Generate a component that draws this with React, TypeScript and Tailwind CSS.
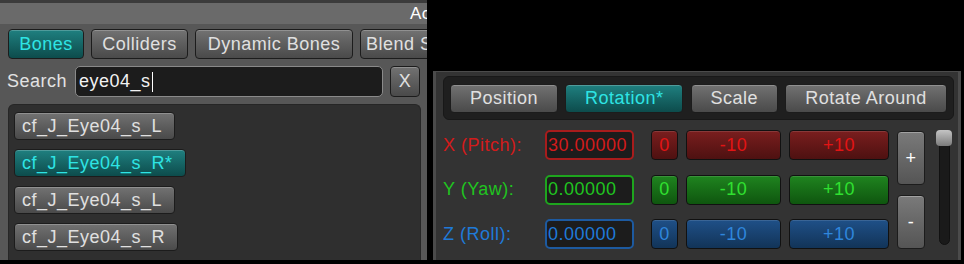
import clsx from 'clsx';

interface BtnProps {
  children?: React.ReactNode;
  active?: boolean;
  className?: string;
}

function Btn({ children, active, className }: BtnProps) {
  return (
    <div
      className={clsx(
        'flex shrink-0 items-center rounded-[4px] border border-[#1c1c1c] shadow-[inset_0_1px_0_rgba(255,255,255,0.22)] whitespace-nowrap',
        active
          ? 'bg-linear-to-b from-[#1f8080] to-[#0d4c4c] text-[#2ee4e4]'
          : 'bg-linear-to-b from-[#727272] to-[#4a4a4a] text-[#e0e0e0]',
        className
      )}
    >
      {children}
    </div>
  );
}

const tabs = [
  { name: 'Bones', w: 'w-[76px]', active: true },
  { name: 'Colliders', w: 'w-[97px]' },
  { name: 'Dynamic Bones', w: 'w-[158px]' },
  { name: 'Blend Shapes', w: 'w-[130px]' },
];

const bones = [
  { name: 'cf_J_Eye04_s_L', w: 'w-[161px]' },
  { name: 'cf_J_Eye04_s_R*', w: 'w-[172px]', active: true },
  { name: 'cf_J_Eye04_s_L', w: 'w-[161px]' },
  { name: 'cf_J_Eye04_s_R', w: 'w-[164px]' },
];

const modes = [
  { name: 'Position', w: 'w-[108px]' },
  { name: 'Rotation*', w: 'w-[118px]', active: true },
  { name: 'Scale', w: 'w-[87px]' },
  { name: 'Rotate Around', w: 'w-[162px]' },
];

const axes = [
  {
    label: 'X (Pitch):',
    value: '30.00000',
    text: 'text-[#d21b1b]',
    border: 'border-[#a81c1c]',
    btn: 'bg-linear-to-b from-[#7a1e1e] to-[#4e1111] text-[#e21414]',
  },
  {
    label: 'Y (Yaw):',
    value: '0.00000',
    text: 'text-[#20c420]',
    border: 'border-[#1ea51e]',
    btn: 'bg-linear-to-b from-[#1f841f] to-[#0f560f] text-[#30e030]',
  },
  {
    label: 'Z (Roll):',
    value: '0.00000',
    text: 'text-[#1f7ad8]',
    border: 'border-[#1d5aa0]',
    btn: 'bg-linear-to-b from-[#1f5088] to-[#123458] text-[#2f86dc]',
  },
];

function AxisBtn({ cls, w, children }: { cls: string; w: string; children: React.ReactNode }) {
  return (
    <div
      className={clsx(
        'flex h-full shrink-0 items-center justify-center rounded-[4px] border border-[#111111] shadow-[inset_0_1px_0_rgba(255,255,255,0.12)]',
        cls,
        w
      )}
    >
      {children}
    </div>
  );
}

export default function App() {
  return (
    <div className="flex h-[264px] w-[964px] items-start overflow-hidden bg-black font-['Liberation_Sans',Arial,sans-serif] text-[18px] tracking-[0.5px]">
      {/* bone list window */}
      <div className="flex h-[260px] w-[427px] shrink-0 flex-col overflow-hidden bg-[#575757]">
        <div className="flex h-[24px] shrink-0 items-center overflow-hidden border-t-[3px] border-[#3b3b3b] bg-[#6a6a6a] pl-[410px] text-[17px] whitespace-nowrap text-white">
          Ac
        </div>

        <div className="mt-[5px] flex h-[30px] shrink-0 gap-[7px] pl-[8px]">
          {tabs.map((t) => (
            <Btn key={t.name} active={t.active} className={clsx('h-full justify-center', t.w)}>
              {t.name}
            </Btn>
          ))}
        </div>

        <div className="mt-[7px] flex h-[31px] shrink-0 items-center pl-[7px]">
          <span className="w-[68px] text-[#e2e2e2]">Search</span>
          <div className="flex h-full w-[308px] items-center rounded-[5px] border border-[#8a8a8a] bg-[#1c1c1c] pl-[3px] text-[#f2f2f2]">
            eye04_s
            <span className="ml-[1px] h-[20px] w-[1px] bg-white" />
          </div>
          <Btn className="ml-[7px] h-full w-[30px] justify-center">X</Btn>
        </div>

        <div className="mt-[7px] ml-[8px] flex w-[413px] flex-1 flex-col items-start gap-[9px] rounded-t-[6px] border border-b-0 border-[#262626] bg-[#2f2f2f] pt-[7px] pl-[5px]">
          {bones.map((b, i) => (
            <Btn key={i} active={b.active} className={clsx('h-[28px] pl-[7px]', b.w)}>
              {b.name}
            </Btn>
          ))}
        </div>
      </div>

      {/* transform panel */}
      <div className="mt-[71px] ml-[6px] flex h-[189px] w-[528px] shrink-0 flex-col overflow-hidden border-t border-l-[3px] border-r-[3px] border-[#4b4b4b] bg-[#333333] pr-[4px] pl-[7px]">
        <div className="mt-[4px] flex h-[44px] w-[511px] shrink-0 items-center justify-between rounded-[6px] border border-[#181818] bg-[#1f1f1f] px-[6px]">
          {modes.map((m) => (
            <Btn key={m.name} active={m.active} className={clsx('h-[29px] justify-center', m.w)}>
              {m.name}
            </Btn>
          ))}
        </div>

        <div className="mt-[10px] flex">
          <div className="flex flex-col gap-[14.5px]">
            {axes.map((a) => (
              <div key={a.label} className="flex h-[30px] items-center">
                <span className={clsx('w-[102px] whitespace-nowrap', a.text)}>{a.label}</span>
                <div
                  className={clsx(
                    'flex h-full w-[89px] items-center rounded-[5px] border-2 bg-[#1c1c1c] pl-[1px]',
                    a.border,
                    a.text
                  )}
                >
                  {a.value}
                </div>
                <div className="ml-[17px] flex h-full gap-[8px]">
                  <AxisBtn cls={a.btn} w="w-[27px]">0</AxisBtn>
                  <AxisBtn cls={a.btn} w="w-[95px]">-10</AxisBtn>
                  <AxisBtn cls={a.btn} w="w-[100px]">+10</AxisBtn>
                </div>
              </div>
            ))}
          </div>

          <div className="mt-[1px] ml-[8px] flex flex-col gap-[10px]">
            <div className="flex h-[54px] w-[28px] items-center justify-center rounded-[4px] border border-[#1c1c1c] bg-linear-to-b from-[#7a7a7a] to-[#555555] text-white shadow-[inset_0_1px_0_rgba(255,255,255,0.3)]">
              +
            </div>
            <div className="flex h-[54px] w-[28px] items-center justify-center rounded-[4px] border border-[#1c1c1c] bg-linear-to-b from-[#7a7a7a] to-[#555555] text-white shadow-[inset_0_1px_0_rgba(255,255,255,0.3)]">
              -
            </div>
          </div>

          <div className="relative ml-[11px] flex w-[16px] justify-center">
            <div className="mt-[5px] h-[110px] w-[11px] rounded-full border border-[#111] bg-[#1a1a1a]" />
            <div className="absolute top-0 left-0 h-[16px] w-[16px] rounded-[4px] bg-linear-to-b from-[#c4c4c4] to-[#7c7c7c]" />
          </div>
        </div>
      </div>
    </div>
  );
}
